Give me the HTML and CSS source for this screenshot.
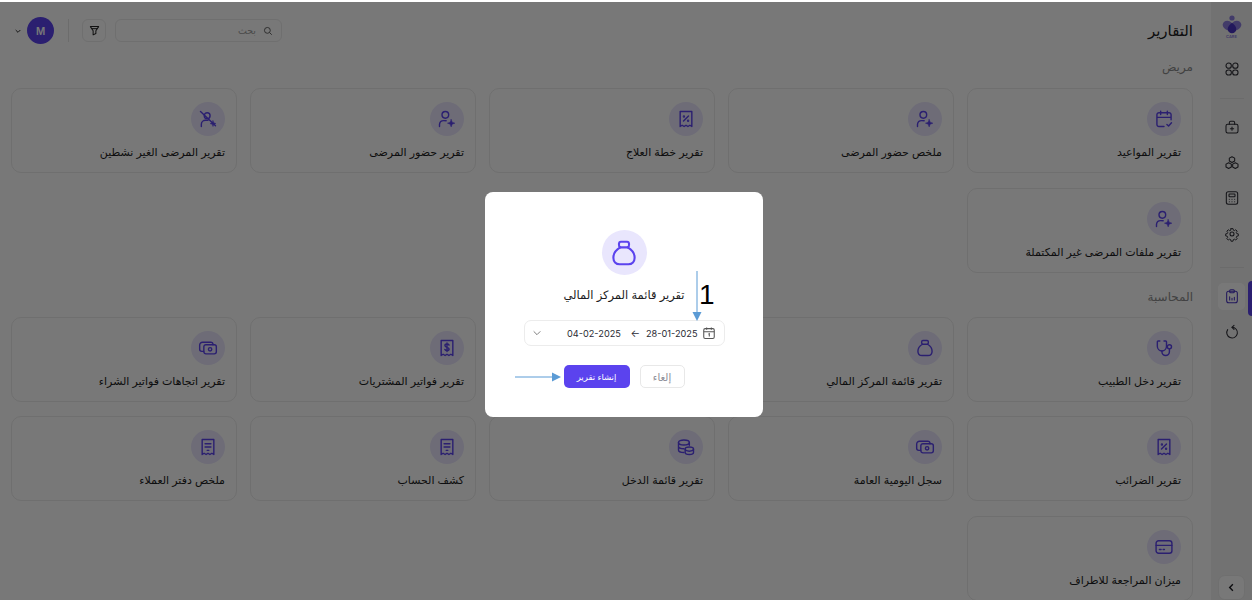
FILE: index.html
```html
<!DOCTYPE html>
<html lang="ar" dir="rtl">
<head>
    <meta charset="UTF-8">
    <title>التقارير</title>
    <link rel="stylesheet" href="styles.css">
</head>
<body>

    <svg class="icon-defs" width="0" height="0">
        <symbol id="i-calendar" viewBox="0 0 24 24"><path d="M8 2.500v4M16 2.500v4M3.500 10h17M20.500 13V7a2.500 2.500 0 0 0-2.500-2.500H6A2.500 2.500 0 0 0 3.500 7v11.500A2.500 2.500 0 0 0 6 21h6"/><path d="M15.500 18.500l2 2 3.500-4"/></symbol>
        <symbol id="i-user-star" viewBox="0 0 24 24"><circle cx="10" cy="7" r="4"/><path d="M3 21v-2.500A5 5 0 0 1 8 14h3"/><path class="solid" d="M17 12.500l1.200 3.300 3.300 1.200-3.300 1.200L17 21.500l-1.200-3.300-3.300-1.200 3.300-1.200z"/></symbol>
        <symbol id="i-user-off" viewBox="0 0 24 24"><circle cx="11" cy="8" r="3.500"/><path d="M4 21v-2.500A5 5 0 0 1 9 13.500h3"/><path class="solid" d="M18 14l.9 2.600 2.600.9-2.600.9-.9 2.600-.9-2.600-2.600-.9 2.600-.9z"/><path d="M3 3l18 17"/></symbol>
        <symbol id="i-receipt-percent" viewBox="0 0 24 24"><path d="M5 3h14v18l-2.300-1.500-2.400 1.500-2.300-1.500-2.300 1.500-2.400-1.500L5 21z"/><path d="M9 14.500l6-6"/><circle cx="9.500" cy="9" r=".6"/><circle cx="14.500" cy="14" r=".6"/></symbol>
        <symbol id="i-receipt-dollar" viewBox="0 0 24 24"><path d="M5 3h14v18l-2.300-1.500-2.400 1.500-2.300-1.500-2.300 1.500-2.400-1.500L5 21z"/><path d="M14.500 8.500c-.5-1-1.500-1.300-2.500-1.300-1.400 0-2.500.7-2.500 1.900 0 2.800 5 1.400 5 4.100 0 1.200-1.100 1.900-2.500 1.900-1.100 0-2.100-.4-2.600-1.400M12 5.800v10.400"/></symbol>
        <symbol id="i-receipt-lines" viewBox="0 0 24 24"><path d="M5 3h14v18l-2.300-1.500-2.400 1.500-2.300-1.500-2.300 1.500-2.400-1.500L5 21z"/><path d="M8.500 8h7M8.500 12h7M11 16h2"/></symbol>
        <symbol id="i-bag" viewBox="0 0 24 24"><path d="M9 7.500h6c3.500 2 5.500 5 5.500 8.300 0 3-2 5.200-5 5.200h-7c-3 0-5-2.200-5-5.200 0-3.300 2-6.300 5.500-8.300z"/><path d="M9 7.500C7.500 6.500 7.500 3 9.500 3h5c2 0 2 3.500.5 4.500"/></symbol>
        <symbol id="i-stethoscope" viewBox="0 0 24 24"><path d="M7 3.500H5a1 1 0 0 0-1 1V10a5.500 5.500 0 0 0 11 0V4.500a1 1 0 0 0-1-1h-2"/><path d="M9.500 15.500v1a4.500 4.500 0 0 0 9 0V13"/><circle cx="18.500" cy="10.500" r="2.500"/></symbol>
        <symbol id="i-money" viewBox="0 0 24 24"><rect x="7" y="8" width="15" height="11" rx="2.500"/><path d="M18 8V7.500A2.500 2.500 0 0 0 15.500 5h-10A3.500 3.500 0 0 0 2 8.500v5A2.500 2.500 0 0 0 4.500 16H7"/><circle cx="14.500" cy="13.500" r="2"/></symbol>
        <symbol id="i-coins" viewBox="0 0 24 24"><ellipse cx="9.500" cy="6.500" rx="6.500" ry="3"/><path d="M3 6.500v9c0 1.700 2.900 3 6.500 3M16 6.500V10M3 11c0 1.700 2.900 3 6.500 3"/><ellipse cx="16" cy="14.500" rx="5" ry="2.500"/><path d="M11 14.500v4c0 1.400 2.200 2.500 5 2.500s5-1.100 5-2.500v-4"/></symbol>
        <symbol id="i-card" viewBox="0 0 24 24"><rect x="2.500" y="4.500" width="19" height="15" rx="3"/><path d="M2.500 10h19M6.500 15h2M11 15h1.500"/></symbol>
    </svg>

    <aside class="sidebar">
        <div class="logo">
            <svg width="20" height="19" viewBox="0 0 20 19"><circle class="logo-soft" cx="10" cy="3" r="2.600"/><path class="logo-soft" d="M9.500 8C7.500 4.500 1 5 .7 9.500.5 13 5 15.500 8 16z"/><path class="logo-soft" d="M10.500 8C12.500 4.500 19 5 19.300 9.500 19.500 13 15 15.500 12 16z"/><path class="logo-dark" d="M10 7.500c2.500 2.500 4.300 4.300 4.300 6.500a4.300 4.300 0 0 1-8.600 0c0-2.200 1.800-4 4.300-6.500z"/></svg>
            <span class="logo-name" dir="ltr">CARE</span>
        </div>
        <a class="side-link" href="#"><svg class="side-icon" viewBox="0 0 24 24"><circle cx="7" cy="7" r="4"/><circle cx="17" cy="7" r="4"/><rect x="3" y="13.500" width="8" height="7.500" rx="3.500"/><rect x="13" y="13.500" width="8" height="7.500" rx="3.500"/></svg></a>
        <hr class="side-rule">
        <a class="side-link" href="#"><svg class="side-icon" viewBox="0 0 24 24"><rect x="3" y="8" width="18" height="13" rx="2.500"/><path d="M8 8V5.500A2 2 0 0 1 10 3.500h4a2 2 0 0 1 2 2V8M12 12v5M9.500 14.500h5"/></svg></a>
        <a class="side-link" href="#"><svg class="side-icon" viewBox="0 0 24 24"><path d="M12 2.500l4 2.200v4.400l-4 2.200-4-2.200V4.700zM7 11.500l4 2.200v4.400l-4 2.200-4-2.200v-4.400zM17 11.500l4 2.200v4.400l-4 2.200-4-2.200v-4.400z"/></svg></a>
        <a class="side-link" href="#"><svg class="side-icon" viewBox="0 0 24 24"><rect x="3.500" y="2.500" width="17" height="19" rx="3"/><rect x="7.500" y="6" width="9" height="4" rx="1"/><path d="M8 14h.01M12 14h.01M16 14h.01M8 17.500h.01M12 17.500h.01M16 17.500h.01"/></svg></a>
        <a class="side-link" href="#"><svg class="side-icon" viewBox="0 0 24 24"><circle cx="12" cy="12" r="3"/><path d="M10.300 3h3.400l.5 2.600 1.800.8 2.200-1.500 2.400 2.400-1.500 2.200.8 1.800 2.600.5v3.400l-2.600.5-.8 1.800 1.500 2.200-2.400 2.400-2.200-1.500-1.800.8-.5 2.600h-3.400l-.5-2.600-1.800-.8-2.200 1.500-2.400-2.400 1.500-2.200-.8-1.800-2.600-.5v-3.400l2.600-.5.800-1.800-1.500-2.200 2.400-2.400 2.200 1.500 1.800-.8z" transform="translate(1.200 1.200) scale(.9)"/></svg></a>
        <hr class="side-rule lower">
        <a class="side-link active" href="#"><svg class="side-icon" viewBox="0 0 24 24"><rect x="4" y="5" width="16" height="17" rx="3"/><rect x="8.500" y="2.500" width="7" height="4.500" rx="1.500"/><path d="M8.500 18v-5M12 18v-2.500M15.500 18v-4"/></svg></a>
        <a class="side-link" href="#"><svg class="side-icon" viewBox="0 0 24 24"><path d="M15 2l-3 3 3 3"/><path d="M12 5a8 8 0 1 1-6.500 3.500"/></svg></a>
        <button class="collapse-btn"><svg class="chev" viewBox="0 0 24 24"><path d="M15 5l-7 7 7 7"/></svg></button>
    </aside>

    <main class="main-content">
        <header class="topbar">
            <h1>التقارير</h1>
            <div class="tools">
                <div class="search">
                    <svg viewBox="0 0 24 24"><circle cx="10.500" cy="10.500" r="7"/><path d="M16 16l5 5"/></svg>
                    <span>بحث</span>
                </div>
                <button class="filter-btn"><svg viewBox="0 0 24 24"><path d="M3 3.500h18l-6 9v6l-6 3v-9z"/><path d="M6 8h12"/></svg></button>
                <span class="tools-rule"></span>
                <span class="avatar">M</span>
                <svg class="user-chev" viewBox="0 0 24 24"><path d="M5 9l7 7 7-7"/></svg>
            </div>
        </header>

        <h2 class="section-title">مريض</h2>
        <section class="report-grid">
            <a class="card" href="#"><span class="card-icon"><svg><use href="#i-calendar"/></svg></span><span class="card-label">تقرير المواعيد</span></a>
            <a class="card" href="#"><span class="card-icon"><svg><use href="#i-user-star"/></svg></span><span class="card-label">ملخص حضور المرضى</span></a>
            <a class="card" href="#"><span class="card-icon"><svg><use href="#i-receipt-percent"/></svg></span><span class="card-label">تقرير خطة العلاج</span></a>
            <a class="card" href="#"><span class="card-icon"><svg><use href="#i-user-star"/></svg></span><span class="card-label">تقرير حضور المرضى</span></a>
            <a class="card" href="#"><span class="card-icon"><svg><use href="#i-user-off"/></svg></span><span class="card-label">تقرير المرضى الغير نشطين</span></a>
            <a class="card" href="#"><span class="card-icon"><svg><use href="#i-user-star"/></svg></span><span class="card-label">تقرير ملفات المرضى غير المكتملة</span></a>
        </section>

        <h2 class="section-title accounting">المحاسبة</h2>
        <section class="report-grid">
            <a class="card" href="#"><span class="card-icon"><svg><use href="#i-stethoscope"/></svg></span><span class="card-label">تقرير دخل الطبيب</span></a>
            <a class="card" href="#"><span class="card-icon"><svg><use href="#i-bag"/></svg></span><span class="card-label">تقرير قائمة المركز المالي</span></a>
            <!-- this one sits behind the modal -->
            <a class="card" href="#"></a>
            <a class="card" href="#"><span class="card-icon"><svg><use href="#i-receipt-dollar"/></svg></span><span class="card-label">تقرير فواتير المشتريات</span></a>
            <a class="card" href="#"><span class="card-icon"><svg><use href="#i-money"/></svg></span><span class="card-label">تقرير اتجاهات فواتير الشراء</span></a>
            <a class="card" href="#"><span class="card-icon"><svg><use href="#i-receipt-percent"/></svg></span><span class="card-label">تقرير الضرائب</span></a>
            <a class="card" href="#"><span class="card-icon"><svg><use href="#i-money"/></svg></span><span class="card-label">سجل اليومية العامة</span></a>
            <a class="card" href="#"><span class="card-icon"><svg><use href="#i-coins"/></svg></span><span class="card-label">تقرير قائمة الدخل</span></a>
            <a class="card" href="#"><span class="card-icon"><svg><use href="#i-receipt-lines"/></svg></span><span class="card-label">كشف الحساب</span></a>
            <a class="card" href="#"><span class="card-icon"><svg><use href="#i-receipt-lines"/></svg></span><span class="card-label">ملخص دفتر العملاء</span></a>
            <a class="card" href="#"><span class="card-icon"><svg><use href="#i-card"/></svg></span><span class="card-label">ميزان المراجعة للاطراف</span></a>
        </section>
    </main>

    <div class="overlay">
        <div class="modal">
            <span class="modal-icon"><svg><use href="#i-bag"/></svg></span>
            <h3>تقرير قائمة المركز المالي</h3>
            <div class="date-field">
                <svg class="date-cal" viewBox="0 0 24 24"><rect x="3" y="4.500" width="18" height="17" rx="2.500"/><path d="M3 10h18M8 2.500v4M16 2.500v4M11 14l1.500-.8V18"/></svg>
                <span class="date-val" dir="ltr">28-01-2025</span>
                <span class="date-arrow">←</span>
                <span class="date-val" dir="ltr">04-02-2025</span>
                <svg class="date-chev" viewBox="0 0 24 24"><path d="M4 8l8 8 8-8"/></svg>
            </div>
            <div class="modal-actions">
                <button class="btn-cancel">إلغاء</button>
                <button class="btn-create">إنشاء تقرير</button>
            </div>

            <!-- annotations drawn on top of the screenshot -->
            <svg class="note-arrow down" width="12" height="50" viewBox="0 0 12 50"><path class="note-line" d="M6 0v42"/><path class="note-head" d="M1.500 41h9L6 50z"/></svg>
            <span class="note-num">1</span>
            <svg class="note-arrow across" width="46" height="12" viewBox="0 0 46 12"><path class="note-line" d="M0 6h38"/><path class="note-head" d="M37 1.500v9L46 6z"/></svg>
        </div>
    </div>

</body>
</html>
```

FILE: styles.css
```css
* {
    box-sizing: border-box;
}

html, body {
    height: 100%;
}

body {
    margin: 0;
    font-family: "Inter", "DejaVu Sans", sans-serif;
    background-color: #fff;
    color: #1c1c22;
    display: flex;
    overflow: hidden;
}

a {
    color: inherit;
    text-decoration: none;
}

.icon-defs {
    position: absolute;
}

symbol path, symbol circle, symbol rect, symbol ellipse {
    fill: none;
    stroke: currentColor;
    stroke-width: 1.700;
    stroke-linecap: round;
    stroke-linejoin: round;
}

symbol .solid {
    fill: currentColor;
    stroke-width: .6;
}

/* sidebar */
.sidebar {
    width: 41px;
    flex: none;
    height: 600px;
    background-color: #f2f2f2;
    display: flex;
    flex-direction: column;
    align-items: center;
    padding-top: 15px;
    position: relative;
}

.logo {
    height: 24px;
    margin-bottom: 16px;
    display: flex;
    flex-direction: column;
    align-items: center;
}

.logo svg {
    flex: none;
}

.logo-name {
    font-size: 4px;
    line-height: 5px;
    font-weight: 600;
    color: #8d7de0;
}

.logo-dark {
    fill: #4a34c4;
}

.logo-soft {
    fill: #8d7de0;
}

.side-link {
    width: 27px;
    height: 27px;
    display: flex;
    align-items: center;
    justify-content: center;
    border-radius: 5px;
    margin-bottom: 8.500px;
    position: relative;
}

.side-icon {
    width: 16px;
    height: 16px;
    fill: none;
    stroke: #2e2e36;
    stroke-width: 1.600;
    stroke-linecap: round;
    stroke-linejoin: round;
}

.side-rule {
    width: 24px;
    border: 0;
    border-top: 1px solid #e4e4e4;
    margin: 7.500px 0 14.500px;
}

.side-rule.lower {
    margin-top: 11.500px;
}

.side-link.active {
    background-color: #fff;
    margin-bottom: 9px;
}

.side-link.active .side-icon {
    stroke: #4a34c4;
}

.side-link.active::after {
    content: "";
    position: absolute;
    right: -7px;
    top: -2px;
    width: 4px;
    height: 35px;
    background-color: #5b43ee;
    border-radius: 4px 0 0 4px;
}

.collapse-btn {
    position: absolute;
    bottom: 0;
    left: 7px;
    width: 27px;
    height: 25px;
    padding: 0;
    background-color: #fff;
    border: 1px solid #ececec;
    border-radius: 7px;
    display: flex;
    align-items: center;
    justify-content: center;
}

.chev {
    width: 11px;
    height: 11px;
    fill: none;
    stroke: #1c1c22;
    stroke-width: 3;
}

/* main */
.main-content {
    flex: 1;
    padding: 19px 18px 0 12px;
    min-width: 0;
}

.topbar {
    display: flex;
    justify-content: space-between;
    align-items: center;
    height: 23px;
}

.topbar h1 {
    margin: 0;
    font-size: 15px;
    line-height: 21px;
    font-weight: 500;
}

.tools {
    display: flex;
    align-items: center;
    margin-left: 2px;
}

.search {
    width: 167px;
    height: 23px;
    border: 1px solid #ececec;
    border-radius: 6px;
    display: flex;
    align-items: center;
    padding: 0 8px;
    gap: 7px;
    font-size: 9.500px;
    color: #a0a0a0;
}

.search svg {
    width: 10px;
    height: 10px;
    fill: none;
    stroke: #555;
    stroke-width: 2.200;
}

.filter-btn {
    width: 24px;
    height: 23px;
    padding: 0;
    margin-right: 9px;
    background: none;
    border: 1px solid #ececec;
    border-radius: 6px;
    display: flex;
    align-items: center;
    justify-content: center;
}

.filter-btn svg {
    width: 11px;
    height: 11px;
    fill: none;
    stroke: #222;
    stroke-width: 2.200;
    stroke-linejoin: round;
}

.tools-rule {
    width: 1px;
    height: 23px;
    background-color: #e6e6e6;
    margin: 0 13px 0 14px;
}

.avatar {
    width: 27px;
    height: 27px;
    border-radius: 50%;
    background-color: #5b43ee;
    color: #fff;
    font-size: 10px;
    font-weight: 600;
    display: flex;
    align-items: center;
    justify-content: center;
}

.user-chev {
    width: 8px;
    height: 8px;
    margin-right: 5px;
    fill: none;
    stroke: #333;
    stroke-width: 3;
}

.section-title {
    margin: 15px 0 11px;
    height: 20px;
    line-height: 20px;
    font-size: 12px;
    font-weight: 400;
    color: #8c8c8c;
}

.section-title.accounting {
    margin: 14px 0 10px;
}

.report-grid {
    display: grid;
    grid-template-columns: repeat(5, 226px);
    grid-auto-rows: 85px;
    column-gap: 13px;
    row-gap: 14.500px;
}

.card {
    border: 1px solid #ececec;
    border-radius: 10px;
    padding: 13px 11px 0;
    display: flex;
    flex-direction: column;
    align-items: flex-start;
}

.card-icon {
    width: 34px;
    height: 34px;
    border-radius: 50%;
    background-color: #e9e6fd;
    color: #5b43ee;
    display: flex;
    align-items: center;
    justify-content: center;
}

.card-icon svg {
    width: 20px;
    height: 20px;
}

.card-label {
    margin-top: 8px;
    font-size: 11px;
    line-height: 17px;
    white-space: nowrap;
}

/* modal */
.overlay {
    position: fixed;
    inset: 0;
    background-color: rgba(0, 0, 0, .53);
    display: flex;
    align-items: center;
    justify-content: center;
    padding: 9px 4px 0 0;
}

.overlay::before {
    content: "";
    position: absolute;
    top: 0;
    left: 0;
    right: 0;
    height: 2px;
    background-color: #fff;
}

.modal {
    position: relative;
    width: 278px;
    height: 225px;
    background-color: #fff;
    border-radius: 8px;
    display: flex;
    flex-direction: column;
    align-items: center;
    padding-top: 38px;
}

.modal-icon {
    width: 45px;
    height: 45px;
    border-radius: 50%;
    background-color: #e9e6fd;
    color: #5b43ee;
    display: flex;
    align-items: center;
    justify-content: center;
}

.modal-icon svg {
    width: 30px;
    height: 30px;
}

.modal h3 {
    margin: 11px 0 0;
    font-size: 11.500px;
    line-height: 18px;
    font-weight: 400;
    white-space: nowrap;
}

.date-field {
    width: 201px;
    height: 26px;
    margin-top: 16px;
    border: 1px solid #ececec;
    border-radius: 7px;
    display: flex;
    align-items: center;
    padding: 0 8px 0 7px;
    font-size: 9.200px;
    color: #2a2a33;
}

.date-cal {
    width: 14px;
    height: 14px;
    flex: none;
    fill: none;
    stroke: #555;
    stroke-width: 1.800;
    margin-left: 4px;
}

.date-arrow {
    margin: 0 6px 0 9.500px;
    font-size: 10px;
}

.date-chev {
    width: 10px;
    height: 10px;
    margin-right: auto;
    fill: none;
    stroke: #666;
    stroke-width: 2;
}

.modal-actions {
    display: flex;
    gap: 10px;
    margin-top: 19px;
}

.modal-actions button {
    height: 23px;
    padding: 0;
    border-radius: 5px;
    font-family: inherit;
}

.btn-cancel {
    width: 45px;
    background-color: #fff;
    border: 1.500px solid #e8e8e8;
    color: #8c8c96;
    font-size: 10px;
}

.btn-create {
    width: 66px;
    background-color: #5b43ee;
    border: 0;
    color: #fff;
    font-size: 8.500px;
    font-weight: 400;
}

.note-arrow {
    position: absolute;
}

.note-arrow.down {
    left: 206px;
    top: 79px;
}

.note-arrow.across {
    left: 30px;
    top: 179px;
}

.note-line {
    fill: none;
    stroke: #5b9bd5;
    stroke-width: 1;
}

.note-head {
    fill: #5b9bd5;
}

.note-num {
    position: absolute;
    left: 214px;
    top: 87px;
    font-family: "Liberation Sans", sans-serif;
    font-size: 28px;
    line-height: 32px;
    color: #000;
}
```
